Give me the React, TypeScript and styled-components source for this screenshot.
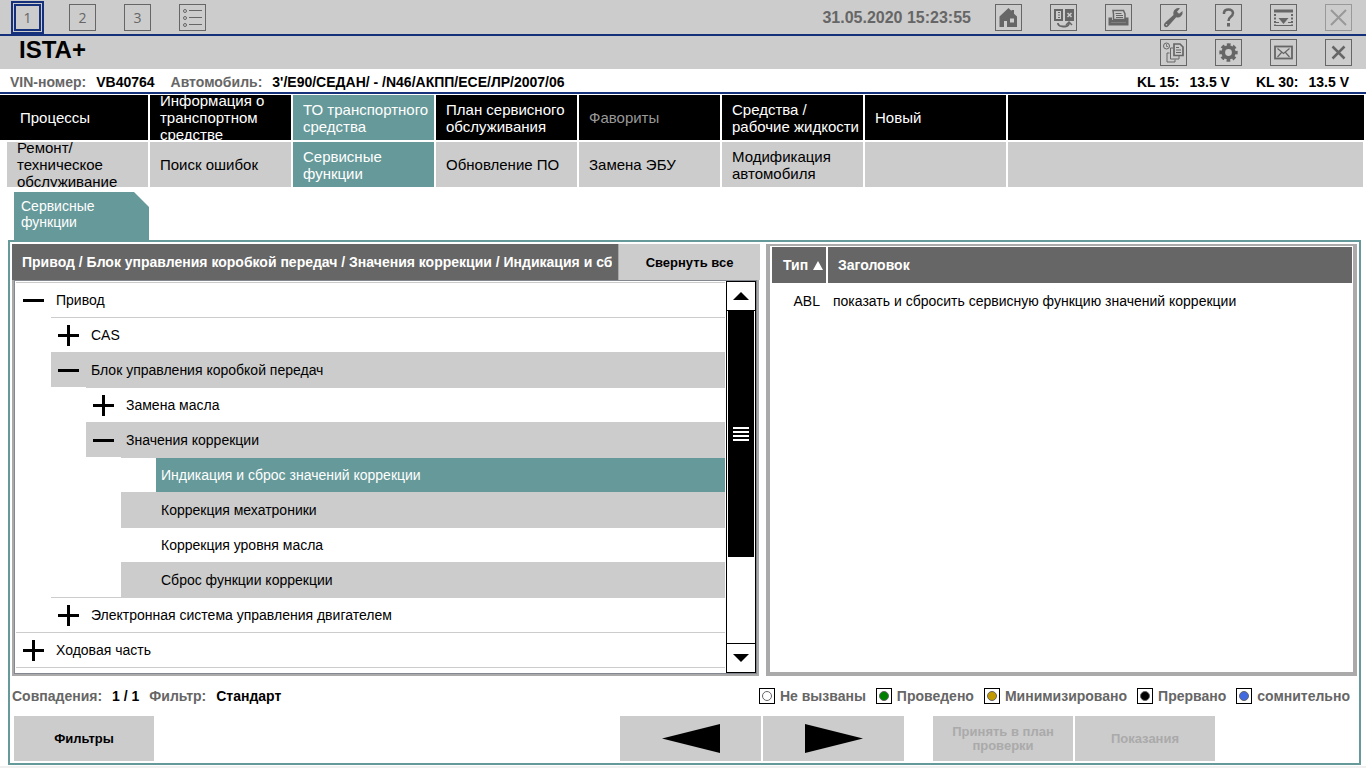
import React from "react";
import styled, { createGlobalStyle, css } from "styled-components";

const c = {
  gray: "#cccccc",
  dark: "#666666",
  teal: "#669999",
  blue: "#16317b",
  frame: "#aaaaaa",
  edge: "#828790",
};

const GlobalStyle = createGlobalStyle`
  *, *::before, *::after { box-sizing: border-box; }
  html, body { margin: 0; background: #ffffff; }
  body, button, table { font-family: "Liberation Sans", Arial, sans-serif; font-size: 14px; color: #000000; }
  button { margin: 0; padding: 0; border: 0; border-radius: 0; background: none; text-align: left; cursor: pointer; }
  button:disabled { cursor: default; }
  ul { margin: 0; padding: 0; list-style: none; }
`;

const Page = styled.div`
  display: flex;
  flex-direction: column;
  min-height: 100vh;
  border-bottom: 2px solid #f0f0f0;
`;

const TopBar = styled.header`
  display: flex;
  justify-content: space-between;
  align-items: flex-start;
  height: 36px;
  padding: 0 14px 0 11px;
  background: ${c.gray};
  border-bottom: 2px solid ${c.blue};
`;

const SessionTabs = styled.nav`
  display: flex;
  gap: 28px;
  padding-top: 1px;
`;

const SessionButton = styled.button<{ $active?: boolean }>`
  display: flex;
  align-items: center;
  justify-content: center;
  width: 27px;
  height: 27px;
  margin-top: 3px;
  border: 1px solid ${c.dark};
  color: ${c.dark};
  font-family: "Open Sans", "Noto Sans", sans-serif;
  font-size: 14px;
  line-height: 16px;
  ${(p) =>
    p.$active &&
    css`
      width: 33px;
      height: 33px;
      margin: 0 -3px 0 0;
      border: 2px solid ${c.blue};
      outline: 2px solid ${c.blue};
      outline-offset: -5px;
    `}
`;

const TopRight = styled.div`
  display: flex;
  align-items: center;
  padding-top: 4px;
`;

const Clock = styled.time`
  margin-right: 24px;
  color: ${c.dark};
  font-size: 16px;
  font-weight: bold;
  line-height: 26px;
`;

const IconRow = styled.div`
  display: flex;
  gap: 28px;
`;

const IconButton = styled.button`
  display: flex;
  width: 27px;
  height: 27px;
  border: 1px solid ${c.dark};
  color: ${c.dark};
  &:disabled {
    border-color: #999999;
    color: #999999;
  }
`;

const TitleBar = styled.div`
  display: flex;
  justify-content: space-between;
  align-items: flex-start;
  height: 33px;
  padding: 3px 14px 0 19px;
  background: ${c.gray};
`;

const AppTitle = styled.h1`
  margin: 0;
  font-size: 24px;
  line-height: 22px;
`;

const VehicleBar = styled.div`
  display: flex;
  justify-content: space-between;
  height: 25px;
  padding: 0 17px 0 10px;
  border-bottom: 2px solid ${c.blue};
  font-weight: bold;
  line-height: 26px;
`;

const Facts = styled.dl<{ $gap: number }>`
  display: flex;
  gap: ${(p) => p.$gap}px;
  margin: 0;
`;

const Fact = styled.div`
  display: flex;
  gap: 10px;
  white-space: nowrap;
  dd {
    margin: 0;
  }
`;

const FactName = styled.dt<{ $muted?: boolean }>`
  color: ${(p) => (p.$muted ? c.dark : "#000000")};
`;

const NavRow = styled.nav<{ $sub?: boolean }>`
  display: grid;
  grid-template-columns: ${(p) => (p.$sub ? 141 : 148)}px repeat(6, 141px) 1fr;
  gap: 2px;
  height: 45px;
  margin: ${(p) => (p.$sub ? "2px 3px 0 7px" : "1px 2px 0 0")};
`;

const NavButton = styled.button<{ $sub?: boolean; $active?: boolean }>`
  display: flex;
  align-items: center;
  height: 45px;
  padding-left: 10px;
  overflow: hidden;
  font-size: 15px;
  line-height: 17px;
  background: ${(p) => (p.$active ? c.teal : p.$sub ? c.gray : "#000000")};
  color: ${(p) => (p.$sub && !p.$active ? "#000000" : "#ffffff")};
  &:first-child {
    padding-left: ${(p) => (p.$sub ? 10 : 20)}px;
  }
  &:disabled {
    color: #999999;
  }
`;

const PageTab = styled.button`
  align-self: flex-start;
  width: 135px;
  height: 48px;
  margin: 5px 0 0 14px;
  padding: 0 40px 4px 7px;
  background: ${c.teal};
  color: #ffffff;
  line-height: 16px;
  clip-path: polygon(0 0, calc(100% - 15px) 0, 100% 15px, 100% 100%, 0 100%);
`;

const Workspace = styled.main`
  flex: 1;
  display: flex;
  flex-direction: column;
  margin: 0 5px 1px 8px;
  padding: 2px;
  border: 2px solid ${c.teal};
`;

const Panels = styled.div`
  flex: 1;
  display: grid;
  grid-template-columns: 748fr 591fr;
  gap: 6px;
`;

const TreePanel = styled.section`
  display: flex;
  flex-direction: column;
  min-width: 0;
`;

const TreeHeader = styled.div`
  display: grid;
  grid-template-columns: minmax(0, 1fr) 142px;
  height: 36px;
`;

const Breadcrumb = styled.h2`
  margin: 0;
  padding: 0 6px 0 10px;
  background: ${c.dark};
  color: #ffffff;
  font-size: 14px;
  line-height: 36px;
  white-space: nowrap;
  span {
    display: block;
    overflow: hidden;
  }
`;

const CollapseButton = styled.button`
  background: ${c.gray};
  border-left: 1px solid ${c.frame};
  font-size: 13px;
  font-weight: bold;
  text-align: center;
`;

const TreeFrame = styled.div`
  flex: 1;
  display: flex;
  margin-right: 1px;
  border: 2px solid ${c.frame};
  border-top: 0;
`;

const TreeInner = styled.div`
  flex: 1;
  display: flex;
  border: 1px solid ${c.edge};
`;

const Tree = styled.ul`
  flex: 1;
  padding: 1px 1px 0 1px;
`;

const TreeItem = styled.li<{ $depth: number; $shaded?: boolean }>`
  display: flex;
  height: 35px;
  margin-left: ${(p) => p.$depth * 35}px;
  border-top: 1px solid ${c.gray};
  background: ${(p) => (p.$shaded ? c.gray : "transparent")};
  &:last-child {
    height: 36px;
    border-bottom: 1px solid ${c.gray};
  }
`;

const Toggle = styled.button`
  display: flex;
  align-items: center;
  justify-content: center;
  width: 35px;
  flex: none;
`;

const NodeButton = styled.button<{ $active?: boolean }>`
  flex: 1;
  padding-left: 5px;
  background: ${(p) => (p.$active ? c.teal : "transparent")};
  color: ${(p) => (p.$active ? "#ffffff" : "#000000")};
`;

const LeafIndent = styled.span`
  width: 35px;
  flex: none;
`;

const ScrollBar = styled.div`
  display: flex;
  flex-direction: column;
  width: 30px;
  border: 1px solid #000000;
`;

const ScrollButton = styled.button`
  display: flex;
  align-items: center;
  justify-content: center;
  height: 28px;
`;

const ScrollTrack = styled.div`
  flex: 1;
  display: flex;
  flex-direction: column;
  padding: 0 1px;
  border: solid #000000;
  border-width: 1px 0;
`;

const ScrollThumb = styled.div`
  flex: 0 0 74%;
  display: flex;
  align-items: center;
  justify-content: center;
  background: #000000;
`;

const ResultPanel = styled.section`
  min-width: 0;
  padding: 1px;
  border: 4px solid ${c.frame};
  border-top-width: 2px;
`;

const ResultTable = styled.table`
  width: calc(100% - 1px);
  margin-left: 1px;
  border-collapse: separate;
  border-spacing: 0;
  th {
    height: 36px;
    padding: 0 0 0 10px;
    background: ${c.dark};
    color: #ffffff;
    text-align: left;
  }
  th:first-child {
    width: 56px;
    padding-left: 11px;
    border-right: 2px solid #ffffff;
  }
  td {
    height: 35px;
    padding: 0 0 0 5px;
  }
  td:first-child {
    padding: 0 8px 0 0;
    text-align: right;
  }
`;

const SortLabel = styled.span`
  display: flex;
  align-items: center;
  gap: 5px;
`;

const StatusRow = styled.div`
  display: flex;
  justify-content: space-between;
  height: 40px;
  padding-right: 7px;
  font-weight: bold;
  line-height: 40px;
`;

const Legend = styled.ul`
  display: flex;
  gap: 10px;
  color: ${c.dark};
`;

const LegendItem = styled.li`
  display: flex;
  align-items: center;
  gap: 5px;
`;

const Footer = styled.footer`
  display: flex;
  justify-content: space-between;
  height: 45px;
  padding: 0 142px 0 2px;
`;

const FooterGroup = styled.div`
  display: flex;
  gap: 2px;
`;

const FooterGroups = styled.div`
  display: flex;
  gap: 29px;
`;

const ActionButton = styled.button`
  width: 140px;
  height: 45px;
  padding: 0 12px;
  background: ${c.gray};
  font-size: 13px;
  font-weight: bold;
  line-height: 14px;
  text-align: center;
  &:disabled {
    color: ${c.frame};
  }
`;

const ArrowButton = styled(ActionButton)`
  display: flex;
  align-items: center;
  justify-content: center;
  width: 141px;
`;

const Glyph = ({ children }: { children: React.ReactNode }) => (
  <svg width="25" height="25" viewBox="0 0 25 25" fill="none" stroke="currentColor" aria-hidden="true">
    {children}
  </svg>
);

const HomeIcon = () => (
  <Glyph>
    <path d="M12.500 3 3.500 11.500V22H8v-6h3v6h10V11.500L18 8.700V5h-2.500v1z" fill="currentColor" stroke="none" />
    <rect x="14" y="13.500" width="4" height="4" fill={c.gray} stroke="none" />
  </Glyph>
);

const SwapIcon = () => (
  <Glyph>
    <rect x="4" y="5" width="7" height="10" strokeWidth="2" />
    <path d="M7 7.500h2M7 10h2M7 12.500h2" />
    <rect x="14" y="4" width="9" height="12" fill="currentColor" stroke="none" />
    <path d="m16.500 8 4 4m0-4-4 4" stroke={c.gray} strokeWidth="1.500" />
    <path d="M7 18v1q1 2.500 5 2.500h2q4-.5 4-3.500" strokeWidth="1.800" />
    <path d="m15 20 3-3 3 3" strokeWidth="1.500" />
  </Glyph>
);

const PrinterIcon = () => (
  <Glyph>
    <path d="M2.500 12.500H6V15h13v-2.500h3.500v8h-20z" fill="currentColor" stroke="none" />
    <path d="M7.500 14.500V9L7 5.500h10.500L19 9v5.500z" strokeWidth="1.500" fill={c.gray} />
    <path d="M9.500 8.500h6M10 10.500h7M10 12.500h7" />
    <path d="M5 17.500h15" stroke="#999999" strokeWidth=".5" />
  </Glyph>
);

const WrenchIcon = () => (
  <Glyph>
    <path d="M14 4.500q2.500-2 5-1.200L16 6.800l2 2 3.500-2.800q.8 3-1.500 5.200-2 1.800-4.800 1L7 21.500q-2 1.500-3.500 0t.2-3.500L12.500 10q-.8-3.500 1.500-5.500z" fill="currentColor" stroke="none" />
    <circle cx="5.500" cy="19.700" r=".8" fill={c.gray} stroke="none" />
  </Glyph>
);

const HelpIcon = () => (
  <Glyph>
    <path d="M8 9V7.500Q8.500 4.500 12.500 4.500T17 8q0 2-2.500 4-2 1.500-2 4" strokeWidth="2.500" />
    <path d="M12.500 18v3.500" strokeWidth="3" />
  </Glyph>
);

const DropWindowIcon = () => (
  <Glyph>
    <path d="M3 6h19" strokeWidth="3" />
    <path d="M4 9v12M21 9v12" strokeWidth="2" strokeDasharray="2 1.500" />
    <path d="M3 20.500h19M3 17.500h5M17 17.500h5" />
    <path d="M7.500 13h10l-5 6z" fill="currentColor" stroke="none" />
  </Glyph>
);

const CloseIcon = ({ large }: { large?: boolean }) => (
  <Glyph>
    <path d={large ? "m5 5 15 15M20 5 5 20" : "m6.500 6.500 12 12M18.500 6.500l-12 12"} strokeWidth={large ? 2 : 2.5} />
  </Glyph>
);

const HistoryIcon = () => (
  <Glyph>
    <circle cx="5.500" cy="6" r="3" />
    <path d="M5.500 4v2.500H7" strokeWidth=".8" />
    <path d="M13 4h6l3 3v8.500h-9z" strokeWidth="1.700" />
    <path d="M15 7.500h3M15 10h5M15 12.500h5" />
    <path d="M12 8H9.500v11H18v-3M8.500 13H6v9h8v-2.500" />
  </Glyph>
);

const GearIcon = () => (
  <Glyph>
    <circle cx="12.500" cy="12.500" r="5.300" strokeWidth="3.800" />
    <circle cx="12.500" cy="12.500" r="7.700" strokeWidth="3" strokeDasharray="3.600 2.447" strokeDashoffset="1.800" />
  </Glyph>
);

const MailIcon = () => (
  <Glyph>
    <rect x="4" y="6.500" width="17" height="12" strokeWidth="1.800" />
    <path d="m6.500 8.500 6 5 6-5M6.500 17l4-4.500M18.500 17l-4-4.500" strokeWidth="1.200" />
  </Glyph>
);

const ListIcon = () => (
  <Glyph>
    {[6, 13, 20].map((y) => (
      <g key={y}>
        <circle cx="5" cy={y} r="1.500" />
        <path d={`M9 ${y - 0.5}h13`} />
      </g>
    ))}
  </Glyph>
);

const ToggleIcon = ({ open }: { open?: boolean }) => (
  <svg width="21" height="21" viewBox="0 0 21 21" stroke="#000000" strokeWidth="3" aria-hidden="true">
    <path d={open ? "M0 10.500h21" : "M0 10.500h21M10.500 0v21"} />
  </svg>
);

const Triangle = ({ points, w, h, fill = "#000000" }: { points: string; w: number; h: number; fill?: string }) => (
  <svg width={w} height={h} viewBox={`0 0 ${w} ${h}`} aria-hidden="true">
    <polygon points={points} fill={fill} />
  </svg>
);

const LegendMark = ({ color }: { color: string }) => (
  <svg width="16" height="16" viewBox="0 0 16 16" aria-hidden="true">
    <rect x=".5" y=".5" width="15" height="15" fill="#ffffff" stroke="#000000" />
    <circle cx="8" cy="8" r="4.500" fill={color} stroke="#666666" />
  </svg>
);

type NavItem = { label: string; active?: boolean; disabled?: boolean };

const mainNav: NavItem[] = [
  { label: "Процессы" },
  { label: "Информация о транспортном средстве" },
  { label: "ТО транспортного средства", active: true },
  { label: "План сервисного обслуживания" },
  { label: "Фавориты", disabled: true },
  { label: "Средства / рабочие жидкости" },
  { label: "Новый" },
  { label: "", disabled: true },
];

const subNav: NavItem[] = [
  { label: "Ремонт/ техническое обслуживание" },
  { label: "Поиск ошибок" },
  { label: "Сервисные функции", active: true },
  { label: "Обновление ПО" },
  { label: "Замена ЭБУ" },
  { label: "Модификация автомобиля" },
  { label: "", disabled: true },
  { label: "", disabled: true },
];

type Node = { label: string; depth: number; open?: boolean; leaf?: boolean; shaded?: boolean; active?: boolean };

const nodes: Node[] = [
  { label: "Привод", depth: 0, open: true },
  { label: "CAS", depth: 1 },
  { label: "Блок управления коробкой передач", depth: 1, open: true, shaded: true },
  { label: "Замена масла", depth: 2 },
  { label: "Значения коррекции", depth: 2, open: true, shaded: true },
  { label: "Индикация и сброс значений коррекции", depth: 3, leaf: true, active: true },
  { label: "Коррекция мехатроники", depth: 3, leaf: true, shaded: true },
  { label: "Коррекция уровня масла", depth: 3, leaf: true },
  { label: "Сброс функции коррекции", depth: 3, leaf: true, shaded: true },
  { label: "Электронная система управления двигателем", depth: 1 },
  { label: "Ходовая часть", depth: 0 },
];

const legend = [
  { label: "Не вызваны", color: "#ffffff" },
  { label: "Проведено", color: "#008000" },
  { label: "Минимизировано", color: "#c09a00" },
  { label: "Прервано", color: "#000000" },
  { label: "сомнительно", color: "#4169e1" },
];

const Nav = ({ items, sub }: { items: NavItem[]; sub?: boolean }) => (
  <NavRow $sub={sub}>
    {items.map((item, i) => (
      <NavButton key={i} type="button" $sub={sub} $active={item.active} disabled={item.disabled}>
        <span>{item.label}</span>
      </NavButton>
    ))}
  </NavRow>
);

export default function App() {
  return (
    <>
      <GlobalStyle />
      <Page>
        <TopBar>
          <SessionTabs>
            <SessionButton type="button" $active>1</SessionButton>
            <SessionButton type="button">2</SessionButton>
            <SessionButton type="button">3</SessionButton>
            <SessionButton type="button" aria-label="Список"><ListIcon /></SessionButton>
          </SessionTabs>
          <TopRight>
            <Clock dateTime="2020-05-31T15:23:55">31.05.2020 15:23:55</Clock>
            <IconRow>
              <IconButton type="button" aria-label="Главная"><HomeIcon /></IconButton>
              <IconButton type="button" aria-label="Переключить"><SwapIcon /></IconButton>
              <IconButton type="button" aria-label="Печать"><PrinterIcon /></IconButton>
              <IconButton type="button" aria-label="Настройки"><WrenchIcon /></IconButton>
              <IconButton type="button" aria-label="Справка"><HelpIcon /></IconButton>
              <IconButton type="button" aria-label="Свернуть"><DropWindowIcon /></IconButton>
              <IconButton type="button" aria-label="Закрыть" disabled><CloseIcon large /></IconButton>
            </IconRow>
          </TopRight>
        </TopBar>

        <TitleBar>
          <AppTitle>ISTA+</AppTitle>
          <IconRow>
            <IconButton type="button" aria-label="История"><HistoryIcon /></IconButton>
            <IconButton type="button" aria-label="Параметры"><GearIcon /></IconButton>
            <IconButton type="button" aria-label="Сообщения"><MailIcon /></IconButton>
            <IconButton type="button" aria-label="Закрыть процесс"><CloseIcon /></IconButton>
          </IconRow>
        </TitleBar>

        <VehicleBar>
          <Facts $gap={16}>
            <Fact><FactName $muted>VIN-номер:</FactName><dd>VB40764</dd></Fact>
            <Fact><FactName $muted>Автомобиль:</FactName><dd>3'/E90/СЕДАН/ - /N46/АКПП/ЕСЕ/ЛР/2007/06</dd></Fact>
          </Facts>
          <Facts $gap={26}>
            <Fact><FactName>KL 15:</FactName><dd>13.5 V</dd></Fact>
            <Fact><FactName>KL 30:</FactName><dd>13.5 V</dd></Fact>
          </Facts>
        </VehicleBar>

        <Nav items={mainNav} />
        <Nav items={subNav} sub />
        <PageTab type="button">Сервисные функции</PageTab>

        <Workspace>
          <Panels>
            <TreePanel>
              <TreeHeader>
                <Breadcrumb>
                  <span>Привод / Блок управления коробкой передач / Значения коррекции / Индикация и сброс</span>
                </Breadcrumb>
                <CollapseButton type="button">Свернуть все</CollapseButton>
              </TreeHeader>
              <TreeFrame>
                <TreeInner>
                  <Tree>
                    {nodes.map((n) => (
                      <TreeItem key={n.label} $depth={n.depth} $shaded={n.shaded}>
                        {n.leaf ? (
                          <LeafIndent />
                        ) : (
                          <Toggle type="button" aria-expanded={!!n.open} aria-label={n.label}>
                            <ToggleIcon open={n.open} />
                          </Toggle>
                        )}
                        <NodeButton type="button" $active={n.active}>{n.label}</NodeButton>
                      </TreeItem>
                    ))}
                  </Tree>
                  <ScrollBar>
                    <ScrollButton type="button" aria-label="Вверх">
                      <Triangle w={16} h={8} points="0,8 8,0 16,8" />
                    </ScrollButton>
                    <ScrollTrack>
                      <ScrollThumb>
                        <svg width="16" height="14" viewBox="0 0 16 14" stroke="#ffffff" strokeWidth="2" aria-hidden="true">
                          <path d="M0 1h16M0 5h16M0 9h16M0 13h16" />
                        </svg>
                      </ScrollThumb>
                    </ScrollTrack>
                    <ScrollButton type="button" aria-label="Вниз">
                      <Triangle w={16} h={8} points="0,0 16,0 8,8" />
                    </ScrollButton>
                  </ScrollBar>
                </TreeInner>
              </TreeFrame>
            </TreePanel>

            <ResultPanel>
              <ResultTable>
                <thead>
                  <tr>
                    <th scope="col">
                      <SortLabel>
                        Тип
                        <Triangle w={10} h={9} points="0,9 5,0 10,9" fill="#ffffff" />
                      </SortLabel>
                    </th>
                    <th scope="col">Заголовок</th>
                  </tr>
                </thead>
                <tbody>
                  <tr>
                    <td>ABL</td>
                    <td>показать и сбросить сервисную функцию значений коррекции</td>
                  </tr>
                </tbody>
              </ResultTable>
            </ResultPanel>
          </Panels>

          <StatusRow>
            <Facts $gap={10}>
              <Fact><FactName $muted>Совпадения:</FactName><dd>1 / 1</dd></Fact>
              <Fact><FactName $muted>Фильтр:</FactName><dd>Стандарт</dd></Fact>
            </Facts>
            <Legend>
              {legend.map((l) => (
                <LegendItem key={l.label}>
                  <LegendMark color={l.color} />
                  {l.label}
                </LegendItem>
              ))}
            </Legend>
          </StatusRow>

          <Footer>
            <ActionButton type="button">Фильтры</ActionButton>
            <FooterGroups>
              <FooterGroup>
                <ArrowButton type="button" aria-label="Назад">
                  <Triangle w={58} h={29} points="0,14.500 58,0 58,29" />
                </ArrowButton>
                <ArrowButton type="button" aria-label="Вперёд">
                  <Triangle w={58} h={29} points="58,14.500 0,0 0,29" />
                </ArrowButton>
              </FooterGroup>
              <FooterGroup>
                <ActionButton type="button" disabled>Принять в план проверки</ActionButton>
                <ActionButton type="button" disabled>Показания</ActionButton>
              </FooterGroup>
            </FooterGroups>
          </Footer>
        </Workspace>
      </Page>
    </>
  );
}
